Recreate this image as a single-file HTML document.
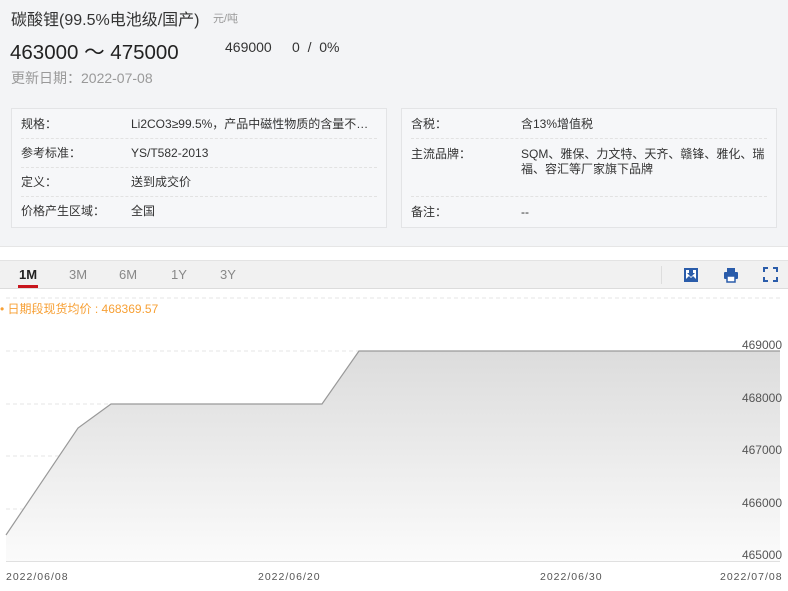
<!DOCTYPE html>
<html><head><meta charset="utf-8"><style>
*{margin:0;padding:0;box-sizing:border-box}
body{width:788px;height:591px;overflow:hidden;background:#fff;font-family:"Liberation Sans","Noto Sans CJK SC",sans-serif;color:#333;position:relative}
.top{position:absolute;left:0;top:0;width:788px;height:247px;background:#f3f4f6;border-bottom:1px solid #e6e6e6}
.abs{position:absolute;white-space:nowrap}
.box{position:absolute;top:108px;width:376px;height:120px;border:1px solid #e3e4e6;background:#f6f7f9;padding:0 9px}
.row{display:flex;border-bottom:1px dashed #e2e2e2;font-size:12px;color:#333}
.row:last-child{border-bottom:none}
.row .k{width:110px;padding-left:0}
.row .v{flex:1}
.tabs{position:absolute;top:260px;left:0;width:788px;height:29px;background:#f1f1f1;border-top:1px solid #e3e3e3;border-bottom:1px solid #dcdcdc}
.tab{position:absolute;top:6px;font-size:13px;color:#888}
</style></head><body>
<div class="top"></div>
<div class="abs" style="left:11px;top:6px;font-size:16px;color:#333">碳酸锂(99.5%电池级/国产)</div>
<div class="abs" style="left:213px;top:10px;font-size:11px;color:#999">元/吨</div>
<div class="abs" style="left:10px;top:35px;font-size:20.5px;color:#222">463000 ～ 475000</div>
<div class="abs" style="left:225px;top:39px;font-size:14px;color:#333">469000</div>
<div class="abs" style="left:292px;top:39px;font-size:14px;color:#333;white-space:pre">0  /  0%</div>
<div class="abs" style="left:11px;top:68px;font-size:14px;color:#999">更新日期：2022-07-08</div>
<div class="box" style="left:11px">
 <div class="row" style="height:30px;line-height:30px"><div class="k">规格：</div><div class="v">Li2CO3≥99.5%，产品中磁性物质的含量不…</div></div>
 <div class="row" style="height:29px;line-height:29px"><div class="k">参考标准：</div><div class="v">YS/T582-2013</div></div>
 <div class="row" style="height:29px;line-height:29px"><div class="k">定义：</div><div class="v">送到成交价</div></div>
 <div class="row" style="height:29px;line-height:29px"><div class="k">价格产生区域：</div><div class="v">全国</div></div>
</div>
<div class="box" style="left:401px">
 <div class="row" style="height:30px;line-height:30px"><div class="k">含税：</div><div class="v">含13%增值税</div></div>
 <div class="row" style="height:58px;line-height:15px;padding-top:8px"><div class="k">主流品牌：</div><div class="v">SQM、雅保、力文特、天齐、赣锋、雅化、瑞福、容汇等厂家旗下品牌</div></div>
 <div class="row" style="height:30px;line-height:30px"><div class="k">备注：</div><div class="v">--</div></div>
</div>
<div class="tabs">
 <div class="tab" style="left:19px;color:#222;font-weight:bold">1M</div>
 <div style="position:absolute;left:18px;top:24px;width:20px;height:3px;background:#c8161d"></div>
 <div class="tab" style="left:69px">3M</div>
 <div class="tab" style="left:119px">6M</div>
 <div class="tab" style="left:171px">1Y</div>
 <div class="tab" style="left:220px">3Y</div>
 <div style="position:absolute;left:661px;top:5px;width:1px;height:18px;background:#ddd"></div>
 <svg style="position:absolute;left:683px;top:6px" width="16" height="16" viewBox="0 0 16 16"><rect x="1" y="1" width="14" height="14" fill="#2a5caa"/><rect x="3" y="3" width="10" height="9" fill="#fff"/><path d="M6 3h4v3h2l-4 4-4-4h2z" fill="#2a5caa"/><path d="M3 12l3-3 2 2 2-2 3 3z" fill="#2a5caa"/></svg>
 <svg style="position:absolute;left:723px;top:6px" width="16" height="16" viewBox="0 0 16 16"><rect x="4" y="1" width="8" height="4" fill="#2a5caa"/><rect x="1" y="5" width="14" height="7" rx="1" fill="#2a5caa"/><rect x="4" y="9" width="8" height="6" fill="#fff" stroke="#2a5caa" stroke-width="1.5"/></svg>
 <svg style="position:absolute;left:763px;top:6px" width="15" height="15" viewBox="0 0 15 15" fill="none" stroke="#2a5caa" stroke-width="2"><path d="M1 5V1h4M10 1h4v4M14 10v4h-4M5 14H1v-4"/></svg>
</div>
<div class="abs" style="left:0;top:300px;font-size:12px;color:#f7a035">• 日期段现货均价 : 468369.57</div>
<svg class="abs" style="left:0;top:290px" width="788" height="301" viewBox="0 290 788 301">
 <defs><linearGradient id="g" x1="0" y1="0" x2="0" y2="1"><stop offset="0" stop-color="#dcdcdc"/><stop offset="1" stop-color="#fbfbfb"/></linearGradient></defs>
 <g stroke="#e6e6e6" stroke-dasharray="4,3"><line x1="6" y1="298" x2="780" y2="298"/><line x1="6" y1="351" x2="780" y2="351"/><line x1="6" y1="404" x2="780" y2="404"/><line x1="6" y1="456" x2="780" y2="456"/><line x1="6" y1="509" x2="780" y2="509"/></g>
 <path d="M6 535L78 428L111 404L322 404L359 351L780 351L780 561L6 561Z" fill="url(#g)"/>
 <path d="M6 535L78 428L111 404L322 404L359 351L780 351" fill="none" stroke="#999" stroke-width="1.2"/>
 <line x1="6" y1="561.5" x2="780" y2="561.5" stroke="#e0e0e0"/>
 <g font-size="12" fill="#555" font-family="Liberation Sans,sans-serif" text-anchor="end">
  <text x="782" y="349">469000</text><text x="782" y="402">468000</text><text x="782" y="454">467000</text><text x="782" y="507">466000</text><text x="782" y="559">465000</text>
 </g>
 <g font-size="10.5" fill="#555" font-family="Liberation Sans,sans-serif" letter-spacing="1">
  <text x="6" y="580">2022/06/08</text><text x="258" y="580">2022/06/20</text><text x="540" y="580">2022/06/30</text><text x="720" y="580">2022/07/08</text>
 </g>
</svg>
</body></html>
